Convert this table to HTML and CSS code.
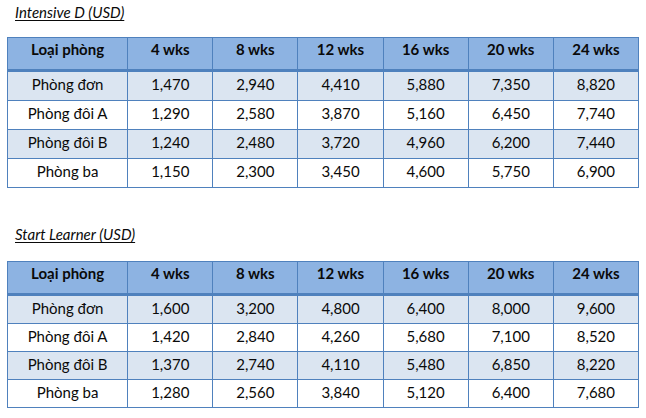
FILE: index.html
```html
<!DOCTYPE html>
<html>
<head>
<meta charset="utf-8">
<link rel="stylesheet" href="styles.css">
</head>
<body>
<div class="page">
  <section class="block">
    <h2 class="title">Intensive D (USD)</h2>
    <table class="prices">
      <colgroup><col class="c-first"><col><col><col><col><col><col></colgroup>
      <thead>
        <tr><th>Loại phòng</th><th>4 wks</th><th>8 wks</th><th>12 wks</th><th>16 wks</th><th>20 wks</th><th>24 wks</th></tr>
      </thead>
      <tbody>
        <tr class="alt"><td>Phòng đơn</td><td>1,470</td><td>2,940</td><td>4,410</td><td>5,880</td><td>7,350</td><td>8,820</td></tr>
        <tr><td>Phòng đôi A</td><td>1,290</td><td>2,580</td><td>3,870</td><td>5,160</td><td>6,450</td><td>7,740</td></tr>
        <tr class="alt"><td>Phòng đôi B</td><td>1,240</td><td>2,480</td><td>3,720</td><td>4,960</td><td>6,200</td><td>7,440</td></tr>
        <tr><td>Phòng ba</td><td>1,150</td><td>2,300</td><td>3,450</td><td>4,600</td><td>5,750</td><td>6,900</td></tr>
      </tbody>
    </table>
  </section>
  <section class="block second">
    <h2 class="title">Start Learner (USD)</h2>
    <table class="prices compact">
      <colgroup><col class="c-first"><col><col><col><col><col><col></colgroup>
      <thead>
        <tr><th>Loại phòng</th><th>4 wks</th><th>8 wks</th><th>12 wks</th><th>16 wks</th><th>20 wks</th><th>24 wks</th></tr>
      </thead>
      <tbody>
        <tr class="alt"><td>Phòng đơn</td><td>1,600</td><td>3,200</td><td>4,800</td><td>6,400</td><td>8,000</td><td>9,600</td></tr>
        <tr><td>Phòng đôi A</td><td>1,420</td><td>2,840</td><td>4,260</td><td>5,680</td><td>7,100</td><td>8,520</td></tr>
        <tr class="alt"><td>Phòng đôi B</td><td>1,370</td><td>2,740</td><td>4,110</td><td>5,480</td><td>6,850</td><td>8,220</td></tr>
        <tr><td>Phòng ba</td><td>1,280</td><td>2,560</td><td>3,840</td><td>5,120</td><td>6,400</td><td>7,680</td></tr>
      </tbody>
    </table>
  </section>
</div>
</body>
</html>
```
FILE: styles.css
```css
html, body {
  margin: 0;
  padding: 0;
  background: #ffffff;
}
body {
  font-family: Lato, "Open Sans", sans-serif;
  color: #0a0a0a;
}
.page {
  padding: 3px 0 0 7px;
}
.block.second {
  margin-top: 37px;
}
.block.second .title {
  margin-bottom: 18px;
}
.title {
  margin: 0 0 16px 8px;
  font-size: 15px;
  font-weight: normal;
  font-style: italic;
  text-decoration: underline;
  text-underline-offset: 2px;
  line-height: 18px;
}
.prices {
  border-collapse: collapse;
  table-layout: fixed;
  width: 632px;
  font-size: 15px;
  line-height: 20px;
}
.prices col { width: 85px; }
.prices col.c-first { width: 120px; }
.prices th,
.prices td {
  border: 1px solid #4f81bd;
  text-align: center;
  vertical-align: top;
  padding: 0;
}
.prices th {
  background: #8db3e2;
  font-weight: bold;
  height: 30px;
  padding-top: 1px;
  border-bottom: 3px solid #4f81bd;
}
.prices td {
  height: 26px;
  padding-top: 2px;
}
.prices.compact td {
  height: 25px;
}
.prices tr.alt td {
  background: #dbe5f1;
}
```
